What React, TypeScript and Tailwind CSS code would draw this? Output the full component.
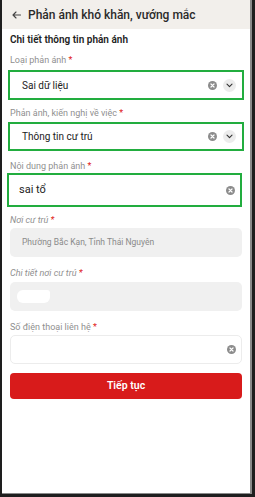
import React from "react";

const ClearIcon = () => (
  <svg width="9" height="9" viewBox="0 0 10 10" className="shrink-0">
    <circle cx="5" cy="5" r="5" fill="#8c8c8c" />
    <path d="M3.3 3.3 L6.7 6.7 M6.7 3.3 L3.3 6.7" stroke="#fff" strokeWidth="1.3" strokeLinecap="round" />
  </svg>
);

const ChevronCircle = () => (
  <div className="w-[13px] h-[13px] rounded-full bg-[#ececec] flex items-center justify-center shrink-0">
    <svg width="7" height="5" viewBox="0 0 7 5">
      <path d="M1 1.2 L3.5 3.6 L6 1.2" stroke="#333" strokeWidth="1.1" fill="none" strokeLinecap="round" strokeLinejoin="round" />
    </svg>
  </div>
);

const Label = ({ text, italic, className = "" }: { text: string; italic?: boolean; className?: string }) => (
  <div className={`h-[12px] leading-[12px] text-[9px] text-[#8f8f8f] ${italic ? "italic" : ""} ${className}`}>
    {text} <span className="text-[#e02020]">*</span>
  </div>
);

export default function App() {
  return (
    <div
      className="w-[255px] h-[497px] bg-[#1e1e1e] pl-[2px] pr-[3px] pb-[3px] overflow-hidden"
      style={{ fontFamily: "Roboto, 'Noto Sans', sans-serif" }}
    >
      <div className="w-full h-full bg-white border-r-[2px] border-b-[1px] border-[#8a8a8a] flex flex-col">
        <div className="h-[29px] bg-[#f2efeb] flex items-center pl-[10px] shrink-0">
          <svg width="9" height="8" viewBox="0 0 9 8" className="mr-[7px]">
            <path d="M8.5 4 H1 M4 1 L1 4 L4 7" stroke="#444" strokeWidth="1.1" fill="none" strokeLinecap="round" strokeLinejoin="round" />
          </svg>
          <span className="text-[12px] font-medium text-[#2a2a2a]">Phản ánh khó khăn, vướng mắc</span>
        </div>

        <div className="px-[8px] flex flex-col">
          <div className="mt-[4px] h-[14px] leading-[14px] text-[10px] font-semibold text-[#222]">Chi tiết thông tin phản ánh</div>

          <Label text="Loại phản ánh" className="mt-[7px]" />
          <div className="mt-[4px] -mx-[2px] h-[30px] border-[2px] border-[#22ad3f] flex items-center pl-[12px] pr-[6px]">
            <span className="flex-1 text-[10px] text-[#222]">Sai dữ liệu</span>
            <ClearIcon />
            <div className="w-[6px]" />
            <ChevronCircle />
          </div>

          <Label text="Phản ánh, kiến nghị về việc" className="mt-[7px]" />
          <div className="mt-[3px] -mx-[2px] h-[29px] border-[2px] border-[#22ad3f] flex items-center pl-[12px] pr-[6px]">
            <span className="flex-1 text-[10px] text-[#222]">Thông tin cư trú</span>
            <ClearIcon />
            <div className="w-[6px]" />
            <ChevronCircle />
          </div>

          <Label text="Nội dung phản ánh" className="mt-[9px]" />
          <div className="mt-[1px] -ml-[3px] h-[34px] border-[2px] border-[#22ad3f] flex items-center pl-[10px] pr-[5px]">
            <span className="flex-1 text-[11px] text-[#222]">sai tổ</span>
            <ClearIcon />
          </div>

          <Label text="Nơi cư trú" italic className="mt-[7px]" />
          <div className="mt-[2px] h-[29px] rounded-[5px] bg-[#f0f0f0] flex items-center pl-[12px]">
            <span className="text-[8.5px] text-[#8a8a8a]">Phường Bắc Kạn, Tỉnh Thái Nguyên</span>
          </div>

          <Label text="Chi tiết nơi cư trú" italic className="mt-[10px]" />
          <div className="mt-[3px] h-[29px] rounded-[5px] bg-[#f0f0f0] flex items-center pl-[7px]">
            <div className="w-[33px] h-[13px] bg-white rounded-[6px] rounded-tr-[3px]" />
          </div>

          <Label text="Số điện thoại liên hệ" className="mt-[10px]" />
          <div className="mt-[2px] h-[29px] rounded-[5px] bg-white border border-[#ececec] flex items-center justify-end pr-[5px]">
            <ClearIcon />
          </div>

          <button className="mt-[9px] h-[26px] rounded-[4px] bg-[#d81b1b] text-white text-[10.5px] font-semibold flex items-center justify-center">
            Tiếp tục
          </button>
        </div>
      </div>
    </div>
  );
}
